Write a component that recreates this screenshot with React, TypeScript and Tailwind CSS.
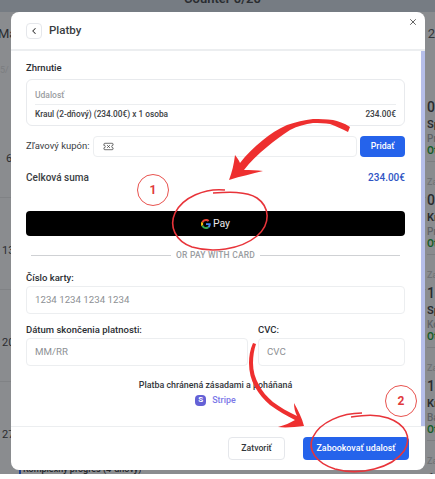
import { ChevronLeft, TicketX, X } from "lucide-react";

const rightItems = [
  { date: "06", title: "Sp", place: "Pr", spot: "" },
  { date: "07", title: "Kr", place: "Pr", spot: "Za" },
  { date: "12", title: "Sp", place: "Ko", spot: "Za" },
  { date: "14", title: "Kr", place: "Ba", spot: "Za" },
  { date: "14", title: "Kr", place: "Ba", spot: "Za" },
];

function Backdrop() {
  return (
    <div className="h-[474px] w-[435px] overflow-hidden bg-[#8a8c8f] text-[#2a2c30]">
      <div className="flex h-3 justify-center bg-[#767c83] pl-[10px]">
        <span className="-mt-[9px] text-[13px] leading-4 font-semibold whitespace-nowrap">Counter 0/20</span>
      </div>
      <div className="flex justify-between pt-[14px] text-[13px] leading-4">
        <span className="-ml-[2px]">Má</span>
        <span className="text-[#33363a]">n 2</span>
      </div>
      <div className="flex">
        {/* Left calendar column */}
        <div className="flex w-[426px] shrink-0 flex-col">
          <span className="pt-[22px] text-[9px] leading-3 text-[#7b7d80]">5/</span>
          <div className="mt-[30px] flex flex-col text-[11px] leading-4">
            <div className="h-[92px] border-b border-[#808285] pt-[45px] pl-[6px]">6</div>
            <div className="h-[92px] border-b border-[#808285] pt-[45px] pl-[2px]">13</div>
            <div className="h-[92px] border-b border-[#808285] pt-[45px] pl-[2px]">20</div>
            <div className="h-[92px] pt-[45px] pl-[2px]">27</div>
          </div>
        </div>
        {/* Right agenda column */}
        <div className="flex shrink-0 flex-col pt-[27px] pl-px">
          {rightItems.map((item, i) => (
            <div key={i} className="flex h-[93px] w-[60px] flex-col border-b border-[#7c7e81] pt-3 font-medium">
              <span className="h-4 text-[9px] leading-4 text-[#707275]">{item.spot}</span>
              <span className="text-[14px] leading-5">{item.date}</span>
              <span className="text-[11px] leading-4 font-semibold">{item.title}</span>
              <span className="text-[10px] leading-3 text-[#606266]">{item.place}</span>
              <span className="text-[10px] leading-3 font-semibold text-[#155d27]">Ot</span>
            </div>
          ))}
        </div>
      </div>
    </div>
  );
}

function GoogleG() {
  return (
    <svg width="10" height="10" viewBox="0 0 48 48">
      <path fill="#EA4335" d="M24 9.5c3.5 0 6.7 1.2 9.2 3.6l6.9-6.9C35.9 2.4 30.5 0 24 0 14.6 0 6.5 5.4 2.6 13.2l8 6.2C12.5 13.7 17.800 9.500 24 9.500z" />
      <path fill="#4285F4" d="M46.900 24.500c0-1.600-.1-3.100-.4-4.500H24v9h12.900c-.6 3-2.200 5.500-4.700 7.200l7.700 6c4.500-4.200 7-10.300 7-17.700z" />
      <path fill="#FBBC05" d="M10.600 28.600c-.5-1.400-.8-3-.8-4.600s.3-3.200.8-4.600l-8-6.200C.9 16.500 0 20.100 0 24s.9 7.500 2.600 10.800l8-6.200z" />
      <path fill="#34A853" d="M24 48c6.500 0 11.900-2.100 15.900-5.800l-7.700-6c-2.200 1.400-4.900 2.300-8.200 2.300-6.200 0-11.500-4.200-13.400-9.900l-8 6.200C6.500 42.600 14.600 48 24 48z" />
    </svg>
  );
}

function Annotations() {
  return (
    <svg className="pointer-events-none absolute inset-0" width="435" height="479" viewBox="0 0 435 479" fill="none">
      {/* arrow to the Google Pay button */}
      <path
        fill="#ee2f2f"
        d="M350 127C344 123 338 121 333 120C326 119 320 119 313 119C304 120 296 122 287 125C278 129 270 134 263 140C254 147 246 155 240 163C239 160 237 158 235 155C234 164 232 172 229 180C241 176 252 174 263 171C257 170 250 170 244 170C250 162 258 154 267 147C274 141 282 135 290 130C298 126 305 124 313 123C319 123 325 123 330 124C336 126 342 129 348 132Z"
      />
      {/* ring around Google Pay */}
      <path
        stroke="#e8343a"
        strokeWidth="1.600"
        d="M225 190C205 188 183 197 175 213C169 226 175 241 192 247C212 253 240 250 257 236C271 224 270 207 257 198C246 191 228 192 213 193"
      />
      {/* arrow to the submit button */}
      <path
        fill="#ee2f2f"
        d="M253 343C250 350 249 356 249 363C249 372 251 380 255 387C259 394 264 400 270 405C278 411 287 416 295 420C290 423 285 425 278 427C286 428 295 427 304 426C302 418 298 410 294 403C294 408 295 412 297 416C288 412 280 407 273 402C267 397 262 391 259 385C255 378 253 371 253 363C253 356 254 350 256 344Z"
      />
      {/* ring around the submit button */}
      <path
        stroke="#e8343a"
        strokeWidth="1.600"
        d="M362 413C342 413 320 422 313 437C307 450 316 463 335 469C360 476 392 468 404 451C413 437 405 424 388 418C376 414 365 415 351 417"
      />
    </svg>
  );
}

export default function App() {
  return (
    <div className="relative h-[479px] w-[435px] overflow-hidden bg-white font-['Roboto',sans-serif]">
      <Backdrop />

      {/* Bottom event peeking out below the modal */}
      <div className="absolute top-[465px] left-[19px] flex h-[9px] items-center overflow-hidden border-l-2 border-[#1d3f8f] pl-[2px] text-[9px] font-medium text-[#22252a]">
        Komplexný progres (4-dňový)
      </div>

      {/* Payment modal */}
      <div className="absolute top-3 left-[11px] flex h-[458px] w-[414px] flex-col overflow-hidden rounded-lg bg-white text-[#33363b]">
        <div className="relative flex h-[39px] shrink-0 items-center gap-[7px] border-b-2 border-[#eceef0] pl-[15px]">
          <button className="flex h-4 w-4 items-center justify-center rounded border border-[#e5e7eb] text-[#333]">
            <ChevronLeft size={10} strokeWidth={2.500} />
          </button>
          <span className="text-[11.500px] font-medium text-[#3a3d42]">Platby</span>
          <X size={10} strokeWidth={2} className="absolute top-[5px] right-[7px] text-[#444]" />
        </div>

        <div className="flex min-h-0 flex-1">
          <div className="flex min-w-0 flex-1 flex-col pt-[9px] pr-[16px] pl-[15px]">
            <h2 className="text-[9.500px] leading-4 font-medium text-[#2b2e33]">Zhrnutie</h2>
            <div className="mt-[3px] flex h-[47px] flex-col rounded-md border border-[#e8eaed] px-2">
              <span className="pt-[9px] pb-[3px] text-[8.500px] leading-3 font-medium text-[#9a9da1]">Udalosť</span>
              <div className="flex justify-between border-t border-[#eceef0] pt-[2px] text-[8.300px] leading-[15px] font-medium text-[#3b3e43]">
                <span>Kraul (2-dňový) (234.00€) x 1 osoba</span>
                <span>234.00€</span>
              </div>
            </div>

            <div className="mt-[10px] flex h-[21px] items-center">
              <span className="w-[67px] text-[9.500px] whitespace-nowrap text-[#3b3e43]">Zľavový kupón:</span>
              <div className="flex h-[21px] w-[265px] items-center rounded border border-[#eceef0] pl-[9px]">
                <TicketX size={11} strokeWidth={1.500} className="text-[#333]" />
              </div>
              <button className="ml-[3px] h-[21px] w-[45px] rounded bg-[#2563eb] text-[8.700px] font-medium text-white">
                Pridať
              </button>
            </div>

            <div className="mt-[13px] flex justify-between text-[10px] leading-4 font-medium">
              <span className="text-[#3b3e43]">Celková suma</span>
              <span className="text-[#3055c4]">234.00€</span>
            </div>

            <div className="mt-[25px] flex h-[25px] items-center justify-center gap-[2px] rounded-sm bg-black text-[10.500px] text-[#e8e8e8]">
              <GoogleG />
              <span>Pay</span>
            </div>

            <div className="mt-[13px] flex items-center px-[5px] text-[8.500px] leading-3 font-medium tracking-wide text-[#9a9da1]">
              <div className="h-px flex-1 bg-[#cfd1d4]" />
              <span className="px-[5px]">OR PAY WITH CARD</span>
              <div className="h-px flex-1 bg-[#cfd1d4]" />
            </div>

            <label className="mt-[9px] text-[9.500px] leading-[15px] font-medium text-[#2b2e33]">Číslo karty:</label>
            <div className="mt-[1px] flex h-[28px] items-center rounded border border-[#eceef0] pl-2 text-[9.700px] text-[#8d9094]">
              1234 1234 1234 1234
            </div>

            <div className="mt-[8px] flex gap-[10px]">
              <div className="flex w-[222px] flex-col">
                <label className="text-[9.500px] leading-[15px] font-medium text-[#2b2e33]">Dátum skončenia platnosti:</label>
                <div className="mt-[1px] flex h-[28px] items-center rounded border border-[#eceef0] pl-2 text-[9.700px] text-[#8d9094]">
                  MM/RR
                </div>
              </div>
              <div className="flex flex-1 flex-col">
                <label className="text-[9.500px] leading-[15px] font-medium text-[#2b2e33]">CVC:</label>
                <div className="mt-[1px] flex h-[28px] items-center rounded border border-[#eceef0] pl-2 text-[9.700px] text-[#8d9094]">
                  CVC
                </div>
              </div>
            </div>

            <p className="mt-[12px] text-center text-[8.900px] leading-[14px] font-medium text-[#33363b]">
              Platba chránená zásadami a poháňaná
            </p>
            <div className="flex items-center justify-center gap-[6px] pt-px">
              <span className="flex h-[11px] w-[11px] items-center justify-center rounded-sm bg-[#6461d6] text-[8px] font-bold text-white">
                S
              </span>
              <span className="text-[8.900px] leading-[14px] font-medium text-[#7b78e8]">Stripe</span>
            </div>
          </div>
          {/* Scrollbar */}
          <div className="w-[4px] shrink-0 bg-[#b6bfea]" />
        </div>

        <div className="flex h-[44px] shrink-0 items-center justify-end gap-[18px] border-t border-[#eceef0] pr-[16px]">
          <button className="h-[23px] w-[57px] rounded border border-[#e5e7eb] text-[8.700px] font-medium text-[#33363b]">
            Zatvoriť
          </button>
          <button className="h-[23px] w-[106px] rounded bg-[#2563eb] text-[8.900px] font-medium whitespace-nowrap text-white">
            Zabookovať udalosť
          </button>
        </div>
      </div>

      <Annotations />

      {/* Step badges */}
      <div className="absolute top-[174px] left-[137px] flex h-8 w-8 items-center justify-center rounded-full border border-[#e8534f] text-[12px] font-bold text-[#e0393b]">
        1
      </div>
      <div className="absolute top-[385px] left-[385px] flex h-8 w-8 items-center justify-center rounded-full border border-[#e8534f] text-[12px] font-bold text-[#e0393b]">
        2
      </div>
    </div>
  );
}
